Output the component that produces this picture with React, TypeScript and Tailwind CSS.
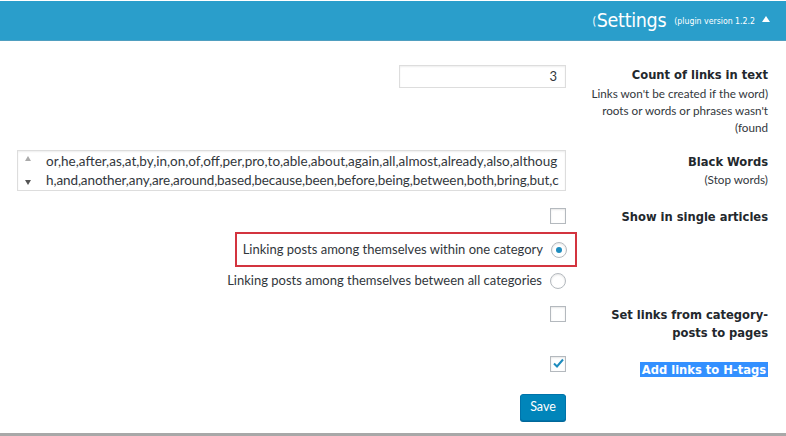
import React from 'react';

const words1 =
  'or,he,after,as,at,by,in,on,of,off,per,pro,to,able,about,again,all,almost,already,also,althoug';
const words2 =
  'h,and,another,any,are,around,based,because,been,before,being,between,both,bring,but,c';

const Checkbox: React.FC<{ checked?: boolean }> = ({ checked }) => (
  <div className="w-[16px] h-[16px] border border-[#b4b9be] bg-white shadow-[inset_0_1px_2px_rgba(0,0,0,0.1)] flex items-center justify-center">
    {checked && (
      <svg width="13" height="13" viewBox="0 0 13 13">
        <path d="M2 6.5 L5 9.5 L11 2.5" fill="none" stroke="#1e8cbe" strokeWidth="2" />
      </svg>
    )}
  </div>
);

const Radio: React.FC<{ checked?: boolean }> = ({ checked }) => (
  <div className="w-[16px] h-[16px] rounded-full border border-[#b4b9be] bg-white shadow-[inset_0_1px_2px_rgba(0,0,0,0.1)] flex items-center justify-center">
    {checked && <div className="w-[6px] h-[6px] rounded-full bg-[#1e8cbe]" />}
  </div>
);

const labelCls =
  "font-['DejaVu_Sans_Condensed','DejaVu_Sans',sans-serif] font-bold text-[12.8px] leading-[18px]";

export default function App() {
  return (
    <div className="w-[786px] h-[436px] bg-white overflow-hidden font-['Lato',sans-serif] text-[#23282d] flex flex-col">
      {/* Header */}
      <div className="mt-[1px] h-[40px] bg-[#2a9ecb] border-b border-[#4f9fc0] flex items-center justify-end pr-[16px] text-white">
        <span className="text-[11px] mr-[1px] mt-[2px]">(</span>
        <span className="text-[19.5px] leading-none font-['DejaVu_Sans_Condensed','DejaVu_Sans',sans-serif] tracking-[-0.3px]">Settings</span>
        <span className="text-[8.7px] ml-[8px] mt-[3px] font-['DejaVu_Sans_Condensed','DejaVu_Sans',sans-serif]">(plugin version 1.2.2</span>
        <svg width="8" height="6" viewBox="0 0 8 6" className="ml-[7px] mb-[4px]">
          <path d="M0 6 L4 0 L8 6 Z" fill="white" />
        </svg>
      </div>

      <div className="flex flex-col pr-[18px]">
        {/* Count of links */}
        <div className="flex justify-end mt-[24px]">
          <div className="w-[167px] h-[23px] border border-[#ddd] shadow-[inset_0_1px_2px_rgba(0,0,0,0.07)] text-right pr-[8px] text-[13px] leading-[21px] text-[#32373c]">
            3
          </div>
          <div className="w-[202px] text-right">
            <div className={`${labelCls} mt-[1px]`}>Count of links in text</div>
            <div className="text-[11.7px] leading-[17px] mt-[1px] text-[#32373c]">
              Links won't be created if the word)
              <br />
              roots or words or phrases wasn't
              <br />
              (found
            </div>
          </div>
        </div>

        {/* Black words */}
        <div className="flex justify-end mt-[14px]">
          <div className="w-[549px] h-[41px] border border-[#ddd] shadow-[inset_0_1px_2px_rgba(0,0,0,0.07)] flex">
            <div className="w-[20px] flex flex-col items-center justify-between py-[5px]">
              <svg width="6" height="5" viewBox="0 0 6 5"><path d="M0 5 L3 0 L6 5 Z" fill="#aaa" /></svg>
              <svg width="6" height="5" viewBox="0 0 6 5"><path d="M0 0 L3 5 L6 0 Z" fill="#555" /></svg>
            </div>
            <div className="flex-1 text-[13.5px] leading-[19px] pt-[1px] pl-[8px] pr-[2px] text-[#32373c] whitespace-nowrap overflow-hidden">
              <div>{words1}</div>
              <div className="tracking-[-0.1px]">{words2}</div>
            </div>
          </div>
          <div className="w-[202px] text-right">
            <div className={`${labelCls} mt-[3px]`}>Black Words</div>
            <div className="text-[11.7px] leading-[17px] text-[#32373c]">(Stop words)</div>
          </div>
        </div>

        {/* Show in single */}
        <div className="flex justify-end mt-[17px]">
          <Checkbox />
          <div className={`w-[202px] text-right ${labelCls}`}>Show in single articles</div>
        </div>

        {/* Radios */}
        <div className="flex justify-end mt-[6px]">
          <div className="w-[342px] h-[35px] border-[2px] border-[#d3343f] flex items-center justify-end pr-[8px] gap-[8px] text-[13px] text-[#32373c] whitespace-nowrap">
            <span>Linking posts among themselves within one category</span>
            <Radio checked />
          </div>
          <div className="w-[191px]" />
        </div>
        <div className="flex justify-end mt-[4px]">
          <div className="flex items-center gap-[8px] text-[13px] text-[#32373c] pr-[1px] whitespace-nowrap">
            <span>Linking posts among themselves between all categories</span>
            <Radio />
          </div>
          <div className="w-[201px]" />
        </div>

        {/* Set links */}
        <div className="flex justify-end mt-[15px]">
          <Checkbox />
          <div className={`w-[202px] text-right ${labelCls}`}>
            Set links from category-
            <br />
            posts to pages
          </div>
        </div>

        {/* H tags */}
        <div className="flex justify-end mt-[14px]">
          <Checkbox checked />
          <div className="w-[202px] text-right">
            <span className={`bg-[#3390ff] text-white px-[2px] ${labelCls}`}>Add links to H-tags</span>
          </div>
        </div>

        {/* Save */}
        <div className="flex justify-end mt-[14px]">
          <button className="w-[46px] h-[27px] rounded-[3px] bg-[#0085ba] border border-[#0073aa] text-white text-[12.5px] shadow-[0_1px_0_#006799]">
            Save
          </button>
          <div className="w-[202px]" />
        </div>
      </div>

      <div className="mt-auto h-[3px] bg-[#a8a8a8]" />
    </div>
  );
}
